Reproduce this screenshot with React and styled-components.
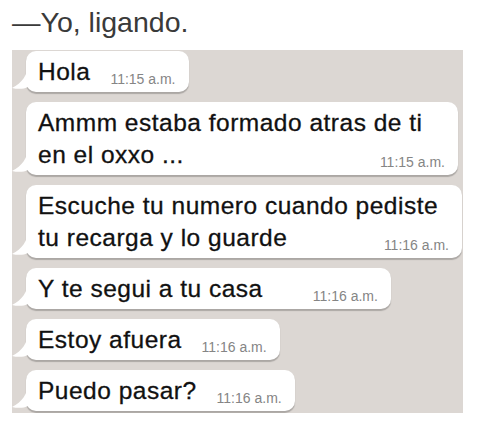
import React from 'react';
import styled, { createGlobalStyle } from 'styled-components';

const GlobalStyle = createGlobalStyle`
  body {
    margin: 0;
    background: #fff;
    font-family: 'Liberation Sans', Arial, sans-serif;
  }
`;

const messages = [
  { lines: ['Hola'], time: '11:15 a.m.' },
  { lines: ['Ammm estaba formado atras de ti', 'en el oxxo ...'], time: '11:15 a.m.', width: 432 },
  { lines: ['Escuche tu numero cuando pediste', 'tu recarga y lo guarde'], time: '11:16 a.m.', width: 436 },
  { lines: ['Y te segui a tu casa'], time: '11:16 a.m.', gap: 50 },
  { lines: ['Estoy afuera'], time: '11:16 a.m.' },
  { lines: ['Puedo pasar?'], time: '11:16 a.m.' },
];

const App = () => {
  return (
    <Page>
      <GlobalStyle />
      <Title>—Yo, ligando.</Title>
      <Chat>
        {messages.map((m, i) => (
          <Bubble key={i} $width={m.width}>
            <Tail viewBox="0 0 16 26" width="16" height="26">
              <path d="M16 0 C16 11 10 19 0 24 C6 25.5 12 25 16 23 Z" fill="#fff" />
            </Tail>
            {m.lines.slice(0, -1).map((l, j) => (
              <Line key={j}>{l}</Line>
            ))}
            <LastRow $gap={m.gap}>
              <Line>{m.lines[m.lines.length - 1]}</Line>
              <Time>{m.time}</Time>
            </LastRow>
          </Bubble>
        ))}
      </Chat>
    </Page>
  );
};

const Page = styled.div`
  width: 480px;
  height: 424px;
  overflow: hidden;
`;

const Title = styled.h1`
  margin: 0;
  padding: 4px 0 0 12px;
  height: 46px;
  box-sizing: border-box;
  font-size: 28.5px;
  font-weight: 400;
  line-height: 36px;
  color: #3a3a3a;
`;

const Chat = styled.div`
  margin: 4px 0 0 12px;
  width: 451px;
  height: 363px;
  box-sizing: border-box;
  padding: 1px 0 0 14px;
  background: #dcd7d3;
  overflow: hidden;
  display: flex;
  flex-direction: column;
  align-items: flex-start;
  gap: 10px;
`;

const Bubble = styled.div`
  position: relative;
  flex-shrink: 0;
  box-sizing: border-box;
  width: ${(p) => (p.$width ? `${p.$width}px` : 'auto')};
  padding: 5px 13px 4px 12px;
  background: #fff;
  border-radius: 10px;
  box-shadow: 0 1.5px 1px rgba(0, 0, 0, 0.22);
`;

const Tail = styled.svg`
  position: absolute;
  left: -14px;
  bottom: 2px;
  display: block;
`;

const Line = styled.div`
  font-size: 24.5px;
  letter-spacing: 0.5px;
  line-height: 32px;
  color: #111;
  -webkit-text-stroke: 0.3px #111;
  white-space: nowrap;
`;

const LastRow = styled.div`
  display: flex;
  align-items: baseline;
  justify-content: space-between;
  gap: ${(p) => p.$gap || 20}px;
`;

const Time = styled.span`
  font-size: 14px;
  color: #858585;
  position: relative;
  top: 4px;
  white-space: nowrap;
`;

export default App;
